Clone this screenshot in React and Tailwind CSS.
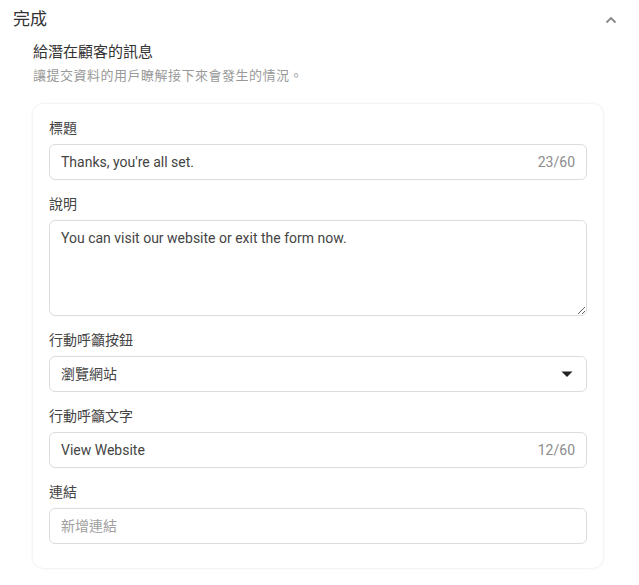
import React from "react";

const font = { fontFamily: '"Roboto", "Noto Sans CJK TC", sans-serif' };

function Label({ children }) {
  return <div className="text-[14px] leading-5 text-[#444] mb-[6px]">{children}</div>;
}

function TextField({ value, count, placeholder }) {
  return (
    <div className="flex h-[36px] items-center rounded-[6px] border border-[#dcdcdc] px-[11px] text-[14px]">
      {value ? (
        <span className="flex-1 text-[#444]">{value}</span>
      ) : (
        <span className="flex-1 text-[#a0a0a0]">{placeholder}</span>
      )}
      {count && <span className="text-[#8c8c8c]">{count}</span>}
    </div>
  );
}

export default function App() {
  return (
    <div className="w-[639px] h-[585px] bg-white" style={font}>
      <div className="flex items-center justify-between pl-[13px] pr-[22px] pt-[7px]">
        <h2 className="text-[17px] leading-6 text-[#333]">完成</h2>
        <svg width="12" height="8" viewBox="0 0 12 8" className="mt-[1px]">
          <path d="M1.5 6.5 L6 2 L10.5 6.5" fill="none" stroke="#888" strokeWidth="1.8" />
        </svg>
      </div>
      <div className="pl-[33px] pr-[36px] pt-[11px]">
        <div className="text-[15px] leading-5 text-[#333]">給潛在顧客的訊息</div>
        <div className="mt-[6px] text-[13px] leading-4 text-[#999] tracking-[0.5px]">讓提交資料的用戶瞭解接下來會發生的情況。</div>
        <div className="mt-[20px] rounded-[10px] bg-white px-[16px] pt-[14px] pb-[24px] shadow-[0_0_3px_rgba(0,0,0,0.12)]">
          <Label>標題</Label>
          <TextField value="Thanks, you're all set." count="23/60" />
          <div className="h-[14px]" />
          <Label>說明</Label>
          <textarea
            className="block h-[96px] w-full resize-y rounded-[6px] border border-[#dcdcdc] px-[11px] py-[7px] text-[14px] leading-5 text-[#444] outline-none"
            defaultValue="You can visit our website or exit the form now."
            style={font}
          />
          <div className="h-[14px]" />
          <Label>行動呼籲按鈕</Label>
          <div className="flex h-[36px] items-center rounded-[6px] border border-[#dcdcdc] px-[11px] text-[14px] text-[#444]">
            <span className="flex-1">瀏覽網站</span>
            <svg width="12" height="7" viewBox="0 0 12 7" className="mr-[2px]">
              <path d="M0.5 0.5 H11.5 L6 6 Z" fill="#222" />
            </svg>
          </div>
          <div className="h-[14px]" />
          <Label>行動呼籲文字</Label>
          <TextField value="View Website" count="12/60" />
          <div className="h-[14px]" />
          <Label>連結</Label>
          <TextField placeholder="新增連結" />
        </div>
      </div>
    </div>
  );
}
